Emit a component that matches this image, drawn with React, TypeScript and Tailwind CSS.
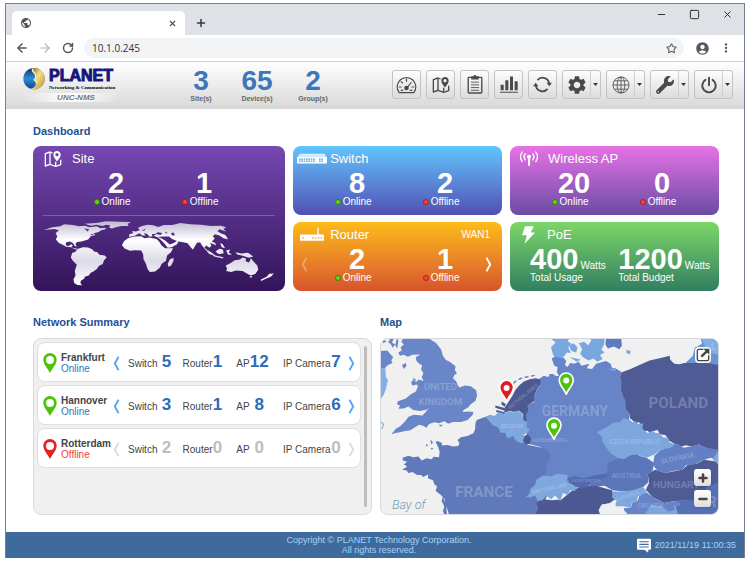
import type { ReactNode } from 'react';
import { ArrowLeft, ArrowRight, Minus, Plus, RotateCw, Square, Star, X } from 'lucide-react';
import { FaWrench } from 'react-icons/fa';
import { MdAccountCircle, MdMoreVert, MdPublic, MdSettings } from 'react-icons/md';

interface IconProps {
    className?: string;
}

const MapPinIcon = ({ className }: IconProps) => (
    <svg viewBox="0 0 54 52" className={className} fill="none" stroke="currentColor" strokeWidth="4" strokeLinejoin="round">
        <path d="M26 8 18 5 4 10v37l14-5 17 6 15-5V28" />
        <path d="M18 5v37M35 34v14" />
        <path
            d="M39 2c-6 0-11 5-11 11 0 8 11 20 11 20s11-12 11-20c0-6-5-11-11-11Zm0 6a5 5 0 1 1 0 10 5 5 0 0 1 0-10Z"
            fill="currentColor"
            fillRule="evenodd"
            stroke="none"
        />
    </svg>
);

const GaugeIcon = ({ className }: IconProps) => (
    <svg viewBox="0 0 62 54" className={className} fill="none" stroke="currentColor" strokeWidth="3.5">
        <path d="M9 50a28 28 0 1 1 44 0Z" strokeLinejoin="round" />
        <path d="M31 9v8M14 16l6 6M8 33h8M46 33h8M31 37l15-19M14 43h7M41 43h7" />
        <circle cx="31" cy="36" r="5" fill="currentColor" />
    </svg>
);

const ClipboardIcon = ({ className }: IconProps) => (
    <svg viewBox="0 0 46 56" className={className} fill="none" stroke="currentColor" strokeWidth="4">
        <rect x="3" y="7" width="40" height="46" rx="2" />
        <path d="M11 21h24M11 29h24M11 37h24M11 45h24" strokeWidth="2.5" />
        <path d="M12 4h7a4 4 0 0 1 8 0h7v9H12Z" fill="currentColor" stroke="none" />
    </svg>
);

const ChartIcon = ({ className }: IconProps) => (
    <svg viewBox="0 0 54 56" className={className} fill="currentColor">
        <path d="M2 29h9v16H2ZM16 15h9v30h-9ZM30 4h9v41h-9ZM44 18h9v27h-9ZM0 50h54v3H0Z" />
    </svg>
);

const SyncIcon = ({ className }: IconProps) => (
    <svg viewBox="0 0 56 56" className={className} fill="none" stroke="currentColor" strokeWidth="5">
        <path d="M13 15A20 20 0 0 1 48 27M43 41A20 20 0 0 1 8 29" />
        <path d="m40 23 8 10 8-10ZM0 33l8-10 8 10Z" fill="currentColor" stroke="none" />
    </svg>
);

const GridGlobeIcon = ({ className }: IconProps) => (
    <svg viewBox="0 0 56 56" className={className} fill="none" stroke="currentColor" strokeWidth="2.5">
        <circle cx="28" cy="28" r="25" />
        <ellipse cx="28" cy="28" rx="12" ry="25" />
        <path d="M28 3v50M3 28h50M7 15h42M7 41h42" />
    </svg>
);

const PowerIcon = ({ className }: IconProps) => (
    <svg viewBox="0 0 52 56" className={className} fill="none" stroke="currentColor" strokeWidth="6" strokeLinecap="round">
        <path d="M26 5v24M15 12a21 21 0 1 0 22 0" />
    </svg>
);

const SwitchIcon = ({ className }: IconProps) => (
    <svg viewBox="0 0 90 32" className={className}>
        <path d="m8 2-6 9h86l-6-9Z" fill="#fff" opacity=".75" />
        <rect x="0" y="11" width="90" height="20" rx="2" fill="#fff" />
        <path d="M6 18h50M6 24h50M66 18h14M66 24h14" stroke="#4fa3e3" strokeWidth="4" strokeDasharray="5 2" />
    </svg>
);

const RouterIcon = ({ className }: IconProps) => (
    <svg viewBox="0 0 72 44" className={className}>
        <rect x="0" y="22" width="72" height="19" rx="3" fill="#fff" />
        <path d="M54 24V3" stroke="#fff" strokeWidth="4" strokeLinecap="round" />
        <path d="M7 32h4M36 32h4M45 32h4M54 32h4M62 32h4" stroke="#f0932b" strokeWidth="4" />
    </svg>
);

const AntennaIcon = ({ className }: IconProps) => (
    <svg viewBox="0 0 52 44" className={className} fill="none" stroke="currentColor" strokeWidth="4" strokeLinecap="round">
        <circle cx="26" cy="17" r="6" fill="currentColor" stroke="none" />
        <path d="M26 24v17" strokeWidth="6" />
        <path d="M15 8q-7 9 0 18M6 3q-10 14 0 28M37 8q7 9 0 18M46 3q10 14 0 28" />
    </svg>
);

const BoltIcon = ({ className }: IconProps) => (
    <svg viewBox="0 0 40 54" className={className} fill="currentColor">
        <path d="M9 0h27l-9 19h13L8 54l7-26H0Z" />
    </svg>
);

const Chevron = ({ direction, className }: { direction: 'left' | 'right'; className?: string }) => (
    <svg viewBox="0 0 20 44" className={className} fill="none" stroke="currentColor" strokeWidth="5.5">
        <path d={direction === 'left' ? 'M16 2 5 22l11 20' : 'm4 2 11 20L4 42'} />
    </svg>
);

const LocationIcon = ({ className }: IconProps) => (
    <svg viewBox="0 0 40 60" className={className} fill="currentColor">
        <path
            fillRule="evenodd"
            d="M20 0C9 0 0 9 0 20c0 14 14 27 20 40 6-13 20-26 20-40C40 9 31 0 20 0Zm0 9a12 12 0 1 1 0 24 12 12 0 0 1 0-24Z"
        />
    </svg>
);

const PlanetLogo = () => (
    <svg viewBox="0 0 66 72" className="h-6 w-[22px]">
        <defs>
            <linearGradient id="gold" x1="0" y1="0" x2="1" y2="1">
                <stop offset="0" stopColor="#8a6210" />
                <stop offset=".45" stopColor="#f6e08c" />
                <stop offset="1" stopColor="#b98a1c" />
            </linearGradient>
            <linearGradient id="sea" x1="0" y1="0" x2="0" y2="1">
                <stop offset="0" stopColor="#15336b" />
                <stop offset=".5" stopColor="#2b8fd8" />
                <stop offset="1" stopColor="#0d3f8f" />
            </linearGradient>
        </defs>
        <circle cx="33" cy="35" r="32" fill="url(#sea)" />
        <path d="M27 4C24 14 31 17 35 23c3 6 0 12-4 15l7 8c3 8-4 15-16 19A32 32 0 0 0 27 4Z" fill="#fff6c8" />
        <path d="M30 3c-1 9 5 12 8 18 3 7 0 13-4 16l7 8c3 10-6 17-18 20a32 32 0 1 0 7-62Z" fill="url(#gold)" />
    </svg>
);

const toolButtons = [
    { label: 'Dashboard', icon: <GaugeIcon className="h-[18px] w-[21px]" /> },
    { label: 'Sites', icon: <MapPinIcon className="size-[18px]" /> },
    { label: 'Log', icon: <ClipboardIcon className="h-[19px] w-4" /> },
    { label: 'Statistics', icon: <ChartIcon className="h-[19px] w-[18px]" /> },
    { label: 'Refresh', icon: <SyncIcon className="size-[19px]" /> },
];

const menuButtons = [
    { label: 'Settings', icon: <MdSettings className="size-[22px]" /> },
    { label: 'Language', icon: <GridGlobeIcon className="size-[18px]" /> },
    { label: 'Tools', icon: <FaWrench className="size-[18px]" /> },
    { label: 'Power', icon: <PowerIcon className="size-[18px]" /> },
];

const BrowserChrome = () => (
    <div>
        <div className="flex h-[31px] items-end bg-[#dee1e6] pl-[6px]">
            <div className="flex h-6 w-[173px] items-center justify-between rounded-t-[5px] bg-white pr-2 pl-2 text-[#4d5156]">
                <MdPublic className="size-3" />
                <button type="button" aria-label="Close tab"><X className="size-[9px]" strokeWidth={3} /></button>
            </div>
            <button type="button" aria-label="New tab" className="ml-[10px] flex h-6 items-center text-[#33363a]">
                <Plus className="size-3" strokeWidth={3} />
            </button>
            <div className="ml-auto flex h-[31px] items-start gap-[22px] pt-[5px] pr-[11px] text-[#222]">
                <button type="button" aria-label="Minimize"><Minus className="size-[11px]" /></button>
                <button type="button" aria-label="Maximize">
                    <Square className="size-[11px]" strokeWidth={2} />
                </button>
                <button type="button" aria-label="Close"><X className="size-[11px]" strokeWidth={2} /></button>
            </div>
        </div>
        <div className="flex h-[27px] items-center border-b border-[#cfcfcf] bg-white pr-[11px] pl-[9px] text-[#55585c]">
            <button type="button" aria-label="Back"><ArrowLeft className="size-[14px]" strokeWidth={2.6} /></button>
            <button type="button" aria-label="Forward" className="ml-[9px] text-[#b0b2b4]"><ArrowRight className="size-[14px]" /></button>
            <button type="button" aria-label="Reload" className="ml-[10px]"><RotateCw className="size-3" strokeWidth={3} /></button>
            <div className="ml-[10px] flex h-5 flex-1 items-center rounded-full bg-[#f1f3f4] pr-[7px] pl-2">
                <input
                    aria-label="Address"
                    defaultValue="10.1.0.245"
                    className="min-w-0 flex-1 bg-transparent font-['Open_Sans','Noto_Sans',sans-serif] text-[10px] text-[#333] outline-none"
                />
                <button type="button" aria-label="Bookmark"><Star className="size-[11px]" strokeWidth={2.2} /></button>
            </div>
            <MdAccountCircle className="ml-[11px] size-[15px]" />
            <button type="button" aria-label="Menu" className="ml-[9px]"><MdMoreVert className="size-[14px]" /></button>
        </div>
    </div>
);

const HeaderStat = ({ value, label }: { value: number; label: string }) => (
    <div className="w-14 text-center font-bold">
        <div className="text-[28px] leading-7 text-[#3a77bd]">{value}</div>
        <div className="text-[7px] leading-[8px] text-[#666]">{label}</div>
    </div>
);

const buttonFrame =
    'h-[29px] rounded-[3px] border border-[#c3c3c3] bg-linear-to-b from-[#fdfdfd] to-[#dcdcdc] text-[#4a4a4a]';

const Header = () => (
    <header className="flex h-[47px] bg-linear-to-b from-white to-[#d8d8d8] pr-[11px] pl-[17px]">
        <div className="flex w-24 flex-col pt-[5px]">
            <div className="flex gap-1">
                <PlanetLogo />
                <div className="text-[#15157c]">
                    <div className="text-[16px] leading-[17px] font-bold [-webkit-text-stroke:1px_#15157c]">PLANET</div>
                    <div className="font-['Liberation_Serif',serif] text-[5px] leading-[7px] font-bold whitespace-nowrap text-black">
                        Networking &amp; Communication
                    </div>
                </div>
            </div>
            <div className="mt-[2px] bg-linear-to-r from-transparent via-white to-transparent pl-[10px] text-center text-[8px] leading-[9px] font-bold text-[#777] italic">
                UNC-NMS
            </div>
        </div>
        <div className="ml-[54px] flex pt-[5px]">
            <HeaderStat value={3} label="Site(s)" />
            <HeaderStat value={65} label="Device(s)" />
            <HeaderStat value={2} label="Group(s)" />
        </div>
        <nav className="ml-auto flex gap-[5px] pt-2">
            {toolButtons.map((b) => (
                <button key={b.label} type="button" aria-label={b.label} className={`${buttonFrame} flex w-[29px] items-center justify-center`}>
                    {b.icon}
                </button>
            ))}
            {menuButtons.map((b) => (
                <button key={b.label} type="button" aria-label={b.label} className={`${buttonFrame} flex w-[39px]`}>
                    <span className="flex h-full flex-1 items-center justify-center">{b.icon}</span>
                    <span className="flex h-full w-[10px] items-center justify-center border-l border-[#cfcfcf]">
                        <svg viewBox="0 0 8 5" className="h-[3px] w-[5px]"><path d="M0 0h8L4 5Z" fill="#333" /></svg>
                    </span>
                </button>
            ))}
        </nav>
    </header>
);

const StatusCount = ({ value, status }: { value: number; status: 'Online' | 'Offline' }) => (
    <div className="flex flex-col items-center">
        <div className="text-[29px] leading-[26px] font-bold">{value}</div>
        <div className="flex items-center gap-[2px] pr-2 text-[10px] leading-3">
            <span
                className={`size-[6px] rounded-full border ${
                    status === 'Online' ? 'border-[#3a7d12] bg-[#5ddc10]' : 'border-[#a82020] bg-[#ff4136]'
                }`}
            />
            {status}
        </div>
    </div>
);

interface TileProps {
    title: string;
    icon: ReactNode;
    className: string;
    iconClassName: string;
    extra?: ReactNode;
    children: ReactNode;
}

const Tile = ({ title, icon, className, iconClassName, extra, children }: TileProps) => (
    <section className={`relative rounded-lg bg-linear-to-b text-white ${className}`}>
        <div className="flex h-6 items-center pt-px pr-3">
            <span className={iconClassName}>{icon}</span>
            <h3 className="text-[13px] leading-4">{title}</h3>
            {extra}
        </div>
        {children}
    </section>
);

const WorldMap = () => (
    <svg viewBox="70 315 700 202" className="mx-[10px] mt-1 h-[67px]">
        <defs>
            <linearGradient id="land" x1="0" y1="315" x2="0" y2="515" gradientUnits="userSpaceOnUse">
                <stop offset="0" stopColor="#b9b4cf" />
                <stop offset=".3" stopColor="#fff" />
                <stop offset=".62" stopColor="#dcdae8" />
                <stop offset="1" stopColor="#fff" />
            </linearGradient>
        </defs>
        <g fill="url(#land)">
            <path d="M73 345 98 337 122 334 134 328 160 330 178 334 196 332 210 337 232 334 243 340 257 338 260 342 246 346 236 352 222 355 228 360 214 364 206 374 186 380 172 381 168 388 172 396 165 393 161 385 151 380 140 382 138 390 146 394 155 388 160 391 155 397 164 400 174 402 182 404 168 404 154 397 140 396 128 389 118 384 109 374 113 364 108 355 118 346 104 342 88 344Z" />
            <path d="M196 326 228 324 244 322 258 319 302 320 335 321 325 327 328 333 306 333 292 336 278 341 270 338 272 331 260 329 250 333 232 329 214 332Z" />
            <path d="M176 402 190 397 206 398 218 403 224 410 234 412 240 420 256 422 262 428 254 436 250 448 238 454 233 462 222 470 214 474 208 482 196 486 194 492 184 498 183 506 188 512 174 511 164 505 162 494 168 482 166 468 172 450 160 438 154 428 158 414 166 412Z" />
            <path d="M329 366 331 357 342 355 338 348 350 350 362 345 356 339 368 333 386 329 402 331 418 336 434 330 460 330 484 324 514 328 546 329 576 333 606 332 622 337 614 342 622 350 602 343 596 349 606 355 620 360 628 373 614 370 602 362 588 358 582 364 588 371 579 380 589 384 592 392 580 386 574 384 578 393 572 399 562 392 557 398 566 408 578 414 586 421 572 418 560 405 550 393 544 383 535 383 528 394 522 405 514 396 506 385 492 382 478 380 474 388 458 397 446 399 436 386 424 374 412 365 426 370 438 377 452 389 464 384 474 378 459 372 450 365 434 365 412 366 404 362 412 357 424 360 430 354 416 352 408 357 398 357 400 365 391 365 384 357 374 354 379 362 370 362 360 355 348 362Z" />
            <path d="M326 370 344 365 366 364 376 370 390 368 412 372 420 380 427 391 438 400 462 400 456 412 444 422 441 438 428 447 422 459 408 470 392 472 385 462 380 446 373 433 372 418 366 407 348 406 332 408 316 401 308 391 314 379Z" />
            <path d="M452 434 463 429 464 437 456 453 448 456 446 447ZM590 410 602 402 612 404 615 415 600 418ZM562 402 590 422 614 427 612 431 586 425ZM622 407 634 404 630 413 640 419 628 420ZM650 412 668 416 688 414 704 425 690 429 672 423 656 419ZM604 384 612 388 619 400 609 397Z" />
            <path d="M621 452 636 445 648 436 664 434 671 428 682 431 681 439 691 443 697 430 704 439 716 452 719 465 710 478 696 482 682 475 672 469 652 467 637 472 622 469 625 462ZM692 485 702 484 697 490ZM745 485 752 477 766 476 757 486 740 493 728 499 726 495Z" />
        </g>
        <g fill="#58358a">
            <path d="M455 355 464 353 468 361 460 362ZM438 350 446 354 440 356ZM366 348 380 341 376 347ZM194 340 210 344 204 350ZM212 357 224 358 218 362Z" />
        </g>
    </svg>
);

const PowerReading = ({ value, label }: { value: number; label: string }) => (
    <div>
        <div className="flex items-baseline gap-[2px] leading-[26px]">
            <span className="text-[29px] font-bold">{value}</span>
            <span className="text-[10px] leading-3">Watts</span>
        </div>
        <div className="text-[10px] leading-3">{label}</div>
    </div>
);

const Dashboard = () => (
    <div className="grid grid-cols-[252fr_209fr_209fr] grid-rows-[69px_69px] gap-x-2 gap-y-[7px]">
        <Tile
            title="Site"
            icon={<MapPinIcon className="size-[18px]" />}
            iconClassName="ml-[11px] w-7"
            className="row-span-2 flex flex-col from-[#7648b2] to-[#33145a]"
        >
            <div className="grid grid-cols-2 pr-[37px] pl-[39px]">
                <StatusCount value={2} status="Online" />
                <StatusCount value={1} status="Offline" />
            </div>
            <hr className="mx-[10px] mt-[7px] border-[#7d5bab]" />
            <WorldMap />
        </Tile>
        <Tile
            title="Switch"
            icon={<SwitchIcon className="h-[11px] w-[30px]" />}
            iconClassName="ml-1 w-[33px]"
            className="from-[#5fc5fd] to-[#5050b4]"
        >
            <div className="grid grid-cols-2 pr-[13px] pl-5">
                <StatusCount value={8} status="Online" />
                <StatusCount value={2} status="Offline" />
            </div>
        </Tile>
        <Tile
            title="Wireless AP"
            icon={<AntennaIcon className="h-[15px] w-[18px]" />}
            iconClassName="ml-[10px] w-7"
            className="from-[#e871e8] to-[#6c4ba3]"
        >
            <div className="grid grid-cols-2 pr-[13px] pl-5">
                <StatusCount value={20} status="Online" />
                <StatusCount value={0} status="Offline" />
            </div>
        </Tile>
        <Tile
            title="Router"
            icon={<RouterIcon className="h-[15px] w-6" />}
            iconClassName="ml-[7px] w-[30px]"
            className="from-[#fdbb16] to-[#d6532b]"
            extra={<span className="ml-auto text-[10px]">WAN1</span>}
        >
            <div className="grid grid-cols-2 pr-[13px] pl-5">
                <StatusCount value={2} status="Online" />
                <StatusCount value={1} status="Offline" />
            </div>
            <button type="button" aria-label="Previous WAN" className="absolute top-[35px] left-2 opacity-30">
                <Chevron direction="left" className="h-[15px] w-[7px]" />
            </button>
            <button type="button" aria-label="Next WAN" className="absolute top-[35px] right-[10px]">
                <Chevron direction="right" className="h-[15px] w-[7px]" />
            </button>
        </Tile>
        <Tile
            title="PoE"
            icon={<BoltIcon className="h-[18px] w-[13px]" />}
            iconClassName="ml-3 w-[25px]"
            className="from-[#7dd766] to-[#317f5f]"
        >
            <div className="flex justify-between pr-[9px] pl-5">
                <PowerReading value={400} label="Total Usage" />
                <PowerReading value={1200} label="Total Budget" />
            </div>
        </Tile>
    </div>
);

const sites = [
    { name: 'Frankfurt', online: true, switches: 5, routers: 1, aps: 12, cameras: 7 },
    { name: 'Hannover', online: true, switches: 3, routers: 1, aps: 8, cameras: 6 },
    { name: 'Rotterdam', online: false, switches: 2, routers: 0, aps: 0, cameras: 0 },
];

const NetworkSummary = () => (
    <div className="flex h-[177px] gap-[3px] rounded-lg border border-[#dadada] bg-[#f0f0f0] py-[3px] pr-1 pl-[3px]">
        <ul className="flex flex-1 flex-col gap-[3px]">
            {sites.map((site) => {
                const count = `text-center text-[17px] font-bold ${site.online ? 'text-[#2e6cb8]' : 'text-[#bdbdbd]'}`;
                const arrow = site.online ? 'text-[#55a4f5]' : 'text-[#dcdcdc]';
                return (
                    <li key={site.name} className="flex h-10 items-center rounded-lg border border-[#dedede] bg-white px-[5px] pt-[2px] text-[10px] text-[#444]">
                        <LocationIcon className={`h-5 w-[14px] ${site.online ? 'text-[#4cc40a]' : 'text-[#e42222]'}`} />
                        <div className="ml-1 w-[52px] leading-[11px]">
                            <div className="font-bold">{site.name}</div>
                            <div className={site.online ? 'text-[#3474bd]' : 'text-[#f43a3a]'}>{site.online ? 'Online' : 'Offline'}</div>
                        </div>
                        <button type="button" aria-label={`Previous devices of ${site.name}`} className={arrow}>
                            <Chevron direction="left" className="h-[15px] w-[7px]" />
                        </button>
                        <div className="mr-[7px] ml-2 grid flex-1 grid-cols-[33px_11px_10fr_30px_10px_13fr_13px_20px_13fr_48px_10px] items-baseline leading-5">
                            <span>Switch</span>
                            <span className={count}>{site.switches}</span>
                            <span />
                            <span>Router</span>
                            <span className={count}>{site.routers}</span>
                            <span />
                            <span>AP</span>
                            <span className={count}>{site.aps}</span>
                            <span />
                            <span className="whitespace-nowrap">IP Camera</span>
                            <span className={count}>{site.cameras}</span>
                        </div>
                        <button type="button" aria-label={`Next devices of ${site.name}`} className={arrow}>
                            <Chevron direction="right" className="h-[15px] w-[7px]" />
                        </button>
                    </li>
                );
            })}
        </ul>
        <div className="my-1 w-[3px] rounded-full bg-[#bdbdbd]" />
    </div>
);

const MapMarker = ({ x, y, color }: { x: number; y: number; color: string }) => (
    <g transform={`translate(${x} ${y})`}>
        <path
            d="M0 0C-6-16-21-26-21-43a21 21 0 0 1 42 0C21-26 6-16 0 0Z"
            fill={color}
            stroke="#fff"
            strokeWidth="5"
            strokeLinejoin="round"
        />
        <circle cy="-41" r="9" fill="#fff" />
    </g>
);

const EuropeMap = () => (
    <div className="relative h-[177px] overflow-hidden rounded-lg border border-[#d5d8de] bg-[#f0f0f0]">
        <svg viewBox="15 24 1017 531" preserveAspectRatio="xMidYMid slice" className="size-full">
            <g fill="#6986c8">
                <path d="M82 24 76 34 84 42 74 50 78 60 67 66 72 76 84 73 96 79 110 73 134 72 120 80 122 92 132 102 139 104 136 118 143 128 138 140 143 152 128 148 122 155 110 149 106 158 110 166 124 163 126 170 120 184 104 193 90 205 66 213 63 222 72 226 68 236 84 235 98 229 112 240 132 243 152 239 160 233 150 246 140 256 114 254 98 260 88 274 74 288 60 296 46 313 58 309 72 307 88 303 104 301 114 294 130 284 142 287 152 293 160 282 176 277 190 280 206 274 218 281 232 276 256 276 276 270 292 254 294 246 278 244 262 246 264 240 278 232 286 222 300 212 305 196 302 180 286 168 268 166 252 172 246 164 242 153 232 144 236 134 244 130 238 118 240 108 222 94 210 88 202 76 196 56 182 38 160 24Z" />
                <path d="M15 62 34 60 44 72 52 80 46 90 50 98 36 104 26 114 15 116ZM44 24 54 24 48 36 58 42 50 52 44 40 36 36ZM62 26 68 28 64 54 58 44ZM78 104 90 98 92 106 84 116ZM18 26 32 32 22 38ZM164 328 172 338 166 344ZM150 342 158 346 152 350ZM164 354 174 356 168 360ZM112 142 122 150 114 152ZM188 284 202 284 196 290Z" />
            </g>
            <path d="M15 116 28 112 30 140 36 150 30 176 24 192 15 206Z" fill="#82b0e6" />
            <path d="M15 278C24 274 24 290 16 297" fill="none" stroke="#6b9fbd" strokeWidth="3" />
            <path
                d="M333 259 320 264 304 270 300 280 299 298 294 310 276 318 256 322 246 330 252 340 248 348 232 350 216 345 200 347 197 338 184 333 180 336 188 352 192 366 190 382 174 381 168 388 152 385 138 392 128 380 112 382 98 378 80 384 81 392 94 396 84 404 94 410 79 420 92 422 98 430 110 427 124 436 136 436 142 442 158 434 156 446 172 452 176 464 184 470 180 484 196 496 208 510 206 528 214 535 220 555 490 555 530 470 530 360 460 345Z"
                fill="#6079ba"
            />
            <path d="M202 500 198 514 206 530 202 545 206 555 214 555 212 530Z" fill="#6079ba" />
            <path
                d="M455 225 478 215 478 196 486 178 496 166 492 146 506 136 520 140 524 131 534 131 544 138 552 136 546 126 548 110 538 106 530 84 540 78 566 82 574 92 570 104 578 110 586 98 598 100 612 94 620 106 644 100 636 114 652 116 664 100 694 92 708 100 712 112 726 116 742 126 736 140 740 158 738 178 746 196 752 214 752 236 764 250 764 268 830 330 760 420 690 450 540 470 500 450 511 432 516 402 526 378 518 362 492 350 462 342 450 290Z"
                fill="#6684c7"
            />
            <path
                d="M388 248 386 236 398 218 412 196 420 180 432 166 446 154 464 147 482 144 496 148 496 164 486 176 478 196 479 212 456 226 460 240 452 256 455 276 444 272 444 252 432 242 416 246 404 242Z"
                fill="#4c5993"
            />
            <path d="m360 226 28 8-2 7-26-8Zm4 14 26 7-4 6-24-8ZM380 214l12 8-4 8-10-8Z" fill="#4c5993" />
            <path d="M414 160C430 142 450 140 488 134" fill="none" stroke="#6684c7" strokeWidth="4" strokeDasharray="12 8" />
            <path d="M331 260 344 254 358 258 370 246 386 251 402 243 416 247 430 242 442 251 444 270 456 276 454 290 464 298 456 310 446 314 450 336 436 340 420 330 414 318 396 326 390 308 376 308 368 292 352 286Z" fill="#7fa8de" />
            <path d="M448 318 458 312 468 326 464 342 450 342 444 332Z" fill="#4c5993" />
            {/* Denmark and the Swedish coast */}
            <path d="M527 24 542 36 528 50 534 72 540 80 564 82 576 66 588 68 580 50 590 40 578 32 584 24ZM582 46 596 38 608 50 604 66 590 62ZM612 38 628 34 640 44 650 30 646 24 690 24 688 42 680 58 690 66 676 74 684 86 668 94 656 84 642 90 626 82 616 70 622 56ZM584 80 604 84 618 88 606 94ZM756 58 768 62 766 72 756 68ZM700 118 724 112 722 122Z" fill="#78a6df" />
            <path d="M694 24 740 24 742 46 734 56 718 48 700 54 692 42Z" fill="#5e7ac0" />
            <path
                d="M742 126 768 116 800 102 826 90 862 82 886 76 888 88 900 100 916 102 930 98 1032 98 1032 380 1002 360 974 344 952 350 934 346 916 352 902 342 884 332 874 316 856 312 850 300 834 304 830 314 820 302 806 304 794 276 784 280 766 264 764 250 752 236 752 214 738 178 740 158 736 140Z"
                fill="#4e5b95"
            />
            <path d="M934 98 956 76 962 52 984 40 980 24 1032 24 1032 104 1000 98Z" fill="#6e93d2" />
            <path d="M984 24 1032 24 1032 72 1000 66 992 46Z" fill="#82b0e6" />
            {/* Alps */}
            <path d="M636 464 690 440 700 420 696 402 724 390 750 376 780 374 816 384 840 400 834 424 820 432 822 458 806 472 776 484 748 486 714 482 690 468 656 472Z" fill="#5c76ba" />
            <path d="M484 520 500 508 530 512 560 510 590 484 620 470 664 468 712 482 720 510 704 522 684 524 672 542 680 555 480 555 490 536Z" fill="#4c5993" />
            <path d="M452 502 464 492 466 478 480 466 484 450 502 438 530 440 546 432 578 436 576 454 588 466 608 470 600 484 586 482 578 496 564 490 556 514 540 498 528 510 514 498 502 512 488 514 480 498 466 504Z" fill="#7fa8de" />
            <path d="M578 446 600 440 624 446 664 436 694 432 700 440 680 450 650 458 640 472 610 474 588 464Z" fill="#526ab0" />
            <path d="M666 306 692 294 716 278 736 276 746 264 762 268 772 278 784 274 790 282 806 280 804 296 820 310 834 302 842 308 856 310 866 322 882 324 886 338 906 344 892 352 880 358 862 358 840 374 816 384 788 374 768 376 748 388 728 384 708 370 694 352 684 336 682 322Z" fill="#7da7dd" />
            <path d="M840 378 860 360 888 354 908 340 928 354 950 350 972 344 1000 354 1032 360 1032 392 1010 384 984 392 962 404 936 406 924 420 896 424 872 430 848 422 836 406Z" fill="#6480c4" />
            <path d="M820 432 842 420 872 430 924 420 940 406 968 402 990 390 1032 396 1032 500 960 512 902 514 870 520 836 504 814 480 824 460Z" fill="#4e5b95" />
            <path d="M714 486 750 486 778 480 806 472 816 486 806 496 790 500 788 514 772 518 770 534 744 530 720 530 726 514 712 504Z" fill="#7da7dd" />
            <path d="M770 534 774 518 790 514 794 500 816 488 840 506 870 520 904 514 918 524 900 530 912 555 750 555 748 536Z" fill="#6684c7" />
            <path d="M814 548 832 526 860 530 884 546 906 540 908 555 816 555Z" fill="#7da7dd" />
            <path d="M904 514 962 510 986 490 1000 470 1032 460 1032 555 912 555 902 530 918 524Z" fill="#5670b5" />
            <path d="M1016 388 1032 364 1032 404Z" fill="#7da7dd" />
            <path d="M672 542 680 526 708 520 724 526 722 540 708 540 718 555 676 555ZM742 538 752 546 760 555 738 555Z" fill="#f0f0f0" />
            <g fill="#fff" fillOpacity=".22" className="font-['Roboto',sans-serif] font-bold" textAnchor="middle">
                <text x="194" y="180" fontSize="29">UNITED</text>
                <text x="194" y="226" fontSize="29">KINGDOM</text>
                <text x="326" y="501" fontSize="46">FRANCE</text>
                <text x="600" y="259" fontSize="42">GERMANY</text>
                <text x="912" y="234" fontSize="46">POLAND</text>
                <text x="410" y="295" fontSize="16">BELGIUM</text>
                <text transform="translate(448 202) rotate(-40)" fontSize="16">NETHERLANDS</text>
                <text x="524" y="336" fontSize="16">LUXEMBOURG</text>
                <text x="780" y="341" fontSize="19">CZECH REPUBLIC</text>
                <text transform="translate(911 392) rotate(-12)" fontSize="22">SLOVAKIA</text>
                <text x="755" y="444" fontSize="21">AUSTRIA</text>
                <text x="906" y="475" fontSize="30">HUNGARY</text>
                <text transform="translate(760 504) rotate(-18)" fontSize="16">SLOVENIA</text>
                <text x="829" y="535" fontSize="19">CROATIA</text>
                <text transform="translate(524 482) rotate(-13)" fontSize="16">SWITZERLAND</text>
                <text x="634" y="458" fontSize="12">LIECHTENSTEIN</text>
                <text x="1014" y="532" fontSize="42">R</text>
                <text x="1018" y="58" fontSize="30">L</text>
            </g>
            <text x="48" y="537" fontSize="38" fill="#6f9cb4" className="font-['Roboto',sans-serif] font-light italic">Bay of</text>
            <MapMarker x={394} y={214} color="#e31b23" />
            <MapMarker x={574} y={192} color="#4cc40a" />
            <MapMarker x={537} y={328} color="#4cc40a" />
        </svg>
        <button type="button" aria-label="Open map" className="absolute top-2 right-[7px] flex size-4 items-center justify-center rounded-sm bg-[#fafafa] text-[#444]">
            <svg viewBox="0 0 42 42" className="size-[14px]" fill="none" stroke="currentColor" strokeWidth="4">
                <path d="M22 4H8a4 4 0 0 0-4 4v26a4 4 0 0 0 4 4h26a4 4 0 0 0 4-4V22" />
                <path d="M16 26 32 10" strokeWidth="7" />
                <path d="M22 2h18v18Z" fill="currentColor" stroke="none" />
            </svg>
        </button>
        <div className="absolute right-[7px] bottom-[7px] flex flex-col gap-1 text-[#444]">
            <button type="button" aria-label="Zoom in" className="flex size-[17px] items-center justify-center rounded-[3px] bg-linear-to-b from-white to-[#dedede] shadow">
                <Plus className="size-3" strokeWidth={5} />
            </button>
            <button type="button" aria-label="Zoom out" className="flex size-[17px] items-center justify-center rounded-[3px] bg-linear-to-b from-white to-[#dedede] shadow">
                <Minus className="size-3" strokeWidth={5} />
            </button>
        </div>
    </div>
);

const SectionTitle = ({ children }: { children: ReactNode }) => (
    <h2 className="text-[11px] leading-4 font-bold text-[#1f4f93]">{children}</h2>
);

const Footer = () => (
    <footer className="grid grid-cols-[1fr_auto_1fr] items-center bg-[#3f6b9c] py-[3px] pr-2 pl-4 text-[9px] leading-[10px] text-[#a5d2fb]">
        <p className="col-start-2 text-center">
            Copyright © PLANET Technology Corporation.
            <br />
            All rights reserved.
        </p>
        <div className="flex items-center justify-end gap-[4px]">
            <svg viewBox="0 0 30 40" className="h-[15px] w-[14px]" preserveAspectRatio="none">
                <path d="M2 2h26a2 2 0 0 1 2 2v25a2 2 0 0 1-2 2h-4v8l-8-8H2a2 2 0 0 1-2-2V4a2 2 0 0 1 2-2Z" fill="#fff" />
                <path d="M5 10h20M5 17h20M5 24h20" stroke="#3f6b9c" strokeWidth="3" />
            </svg>
            <time>2021/11/19 11:00:35</time>
        </div>
    </footer>
);

export default function App() {
    return (
        <div className="bg-white px-[5px] pt-[3px] pb-1 font-['Liberation_Sans',Arial,sans-serif]">
            <div className="border border-b-0 border-[#76818f]">
                <BrowserChrome />
                <Header />
                <main className="pt-[14px] pr-[25px] pb-[17px] pl-[27px]">
                    <SectionTitle>Dashboard</SectionTitle>
                    <div className="mt-[7px]">
                        <Dashboard />
                    </div>
                    <div className="mt-[23px] grid grid-cols-2 gap-2">
                        <section>
                            <SectionTitle>Network Summary</SectionTitle>
                            <div className="mt-2"><NetworkSummary /></div>
                        </section>
                        <section>
                            <SectionTitle>Map</SectionTitle>
                            <div className="mt-2"><EuropeMap /></div>
                        </section>
                    </div>
                </main>
                <Footer />
            </div>
        </div>
    );
}
